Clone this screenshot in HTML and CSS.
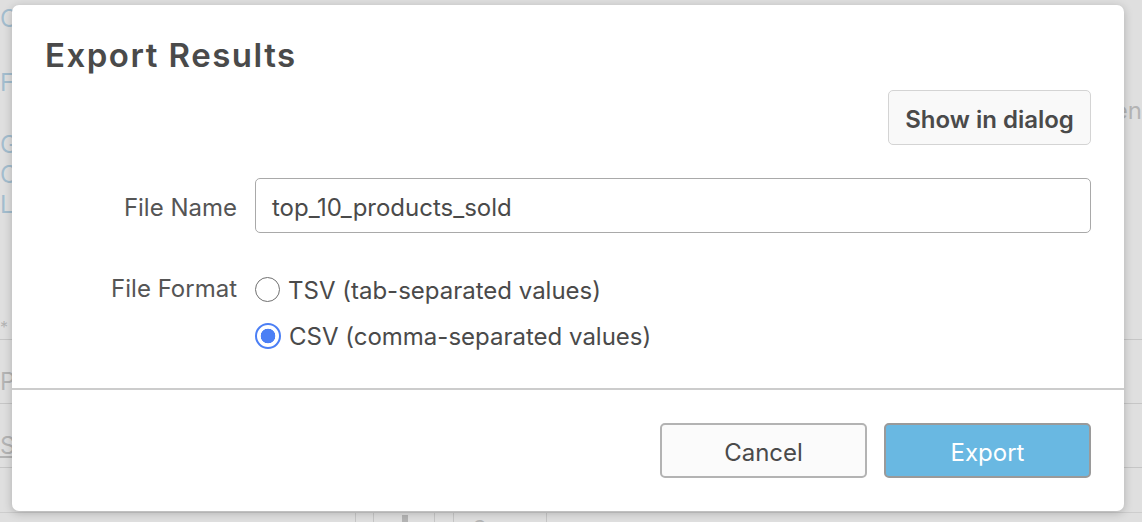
FILE: index.html
```html
<!DOCTYPE html>
<html>
<head>
<meta charset="utf-8">
<link rel="stylesheet" href="styles.css">
</head>
<body>
<div class="page">
  <div class="code">
    <div class="code-line l1">CTE</div>
    <div class="code-line l2">FROM</div>
    <div class="code-line l3">GROUP</div>
    <div class="code-line l4">ORDER</div>
    <div class="code-line l5">LIMIT</div>
  </div>
  <div class="side-text">en</div>
  <div class="results">
    <div class="res-row res-head">*</div>
    <div class="res-row">Pr</div>
    <div class="res-row"><span class="link">S</span></div>
  </div>
  <div class="bottom-bar">
    <span class="tb-cell"></span><span class="tb-cell tb-mark"></span><span class="tb-cell tb-copy">Copy</span>
  </div>
</div>
<div class="backdrop"></div>
<div class="modal">
  <div class="modal-body">
    <h1 class="modal-title">Export Results</h1>
    <div class="toolbar">
      <button class="btn btn-plain">Show in dialog</button>
    </div>
    <div class="form-row">
      <label class="form-label">File Name</label>
      <div class="input">top_10_products_sold</div>
    </div>
    <div class="form-row form-row-top">
      <label class="form-label">File Format</label>
      <div class="radios">
        <div class="radio-item"><span class="radio"></span><span>TSV (tab-separated values)</span></div>
        <div class="radio-item"><span class="radio radio-on"></span><span>CSV (comma-separated values)</span></div>
      </div>
    </div>
  </div>
  <div class="modal-footer">
    <button class="btn btn-cancel">Cancel</button>
    <button class="btn btn-primary">Export</button>
  </div>
</div>
</body>
</html>
```
FILE: styles.css
```css
* { box-sizing: border-box; }
html, body { margin: 0; padding: 0; }
body {
  width: 1142px;
  height: 522px;
  overflow: hidden;
  font-family: Inter, "Noto Sans", sans-serif;
  background: #fff;
  position: relative;
}
.page {
  height: 522px;
  display: flex;
  flex-direction: column;
}
.code {
  padding: 4px 0 0 0;
  color: #5aa0cf;
  font-size: 24px;
  line-height: 30px;
}
.code-line { height: 30px; }
.l2 { margin-top: 34px; }
.l3 { margin-top: 32px; }
.side-text {
  position: absolute;
  top: 96px;
  right: 0;
  font-size: 24px;
  color: #888;
}
.results {
  margin-top: 92px;
}
.res-row {
  height: 28px;
  border-bottom: 1px solid #bbb;
  font-size: 24px;
  line-height: 28px;
  color: #888;
}
.res-head { font-size: 16px; line-height: 30px; }
.res-row + .res-row { height: 64px; line-height: 84px; }
.link { text-decoration: underline; }
.bottom-bar {
  margin-top: auto;
  height: 10px;
  display: flex;
  padding-left: 355px;
  border-top: 1px solid #ccc;
  overflow: hidden;
}
.tb-cell {
  width: 18px;
  border-left: 1px solid #bbb;
  font-size: 20px;
  color: #888;
}
.tb-mark { width: 62px; border-right: 1px solid #bbb; position: relative; }
.tb-mark::after {
  content: "";
  position: absolute;
  left: 28px;
  top: 2px;
  width: 6px;
  height: 10px;
  background: #888;
}
.tb-copy { width: 94px; margin-left: 18px; border-right: 1px solid #bbb; padding-left: 18px; line-height: 30px; }
.backdrop {
  position: absolute;
  inset: 0;
  background: rgba(205, 205, 205, 0.64);
}
.modal {
  position: absolute;
  left: 12px;
  top: 5px;
  width: 1112px;
  height: 506px;
  background: #fff;
  border-radius: 7px;
  box-shadow: 0 2px 10px rgba(0, 0, 0, 0.22);
  display: flex;
  flex-direction: column;
  color: #4a4a4a;
}
.modal-body {
  flex: 1;
  padding: 31px 33px 0 33px;
}
.modal-title {
  margin: 0;
  font-size: 33px;
  line-height: 38px;
  font-weight: 600;
  letter-spacing: 1.5px;
  color: #4a4a4a;
}
.toolbar {
  display: flex;
  justify-content: flex-end;
  margin-top: 16px;
}
.btn {
  font-family: Inter, "Noto Sans", sans-serif;
  height: 55px;
  border-radius: 5px;
  font-size: 24px;
  padding: 4px 0 0 0;
  cursor: pointer;
}
.btn-plain {
  width: 203px;
  background: #f9f9f9;
  border: 1px solid #d4d4d4;
  font-weight: 600;
  color: #4a4a4a;
}
.form-row {
  display: flex;
  align-items: center;
  margin-top: 33px;
}
.form-row-top { align-items: flex-start; margin-top: 42px; }
.form-label {
  width: 192px;
  text-align: right;
  margin-right: 18px;
  font-size: 24px;
  color: #555;
  padding-top: 3px;
}
.form-row-top .form-label { line-height: 28px; padding-top: 0; }
.input {
  flex: 1;
  height: 55px;
  border: 1px solid #a9a9a9;
  border-radius: 5px;
  padding: 3px 16px 0 16px;
  display: flex;
  align-items: center;
  font-size: 24px;
  color: #4a4a4a;
}
.radios {
  display: flex;
  flex-direction: column;
  gap: 18px;
  padding-top: 2px;
}
.radio-item {
  display: flex;
  align-items: center;
  gap: 8px;
  height: 28px;
  font-size: 24px;
  line-height: 28px;
  color: #4a4a4a;
}
.radio {
  width: 25px;
  height: 25px;
  margin-top: -3px;
  border-radius: 50%;
  border: 1.5px solid #707070;
  background: #fff;
  flex: none;
}
.radio-on {
  width: 26px;
  height: 26px;
  border: 2px solid #4b7ff5;
  background: radial-gradient(circle, #4b7ff5 0 7px, #fff 7.6px);
}
.modal-footer {
  border-top: 2px solid #ccc;
  height: 123px;
  padding: 33px 33px 0 0;
  display: flex;
  justify-content: flex-end;
  gap: 17px;
}
.btn-cancel {
  width: 207px;
  background: #fbfbfb;
  border: 2px solid #b3b3b3;
  color: #4a4a4a;
  font-weight: 400;
}
.btn-primary {
  width: 207px;
  background: #69b8e2;
  border: 2px solid #9a9a9a;
  color: #fff;
  font-weight: 400;
}
```
